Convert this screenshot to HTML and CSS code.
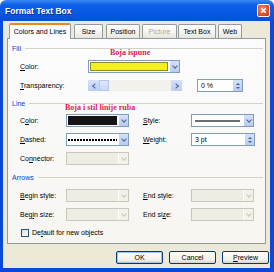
FILE: index.html
```html
<!DOCTYPE html>
<html lang="hr">
<head>
  <meta charset="UTF-8" />
  <title>Format Text Box</title>
  <link rel="stylesheet" href="styles.css">
</head>
<body>

<div class="window">
  <div class="titlebar">
    <span class="title">Format Text Box</span>
    <span class="close">
      <svg width="12" height="13" viewBox="0 0 12 13"><path d="M3.5 4l5 5M8.5 4l-5 5" stroke="#fff" stroke-width="1.6" fill="none"/></svg>
    </span>
  </div>

  <div class="body">
    <div class="tabs">
      <div class="tab active t-colors">Colors and Lines</div>
      <div class="tab t-size">Size</div>
      <div class="tab t-position">Position</div>
      <div class="tab disabled t-picture">Picture</div>
      <div class="tab t-textbox">Text Box</div>
      <div class="tab t-web">Web</div>
    </div>

    <div class="panel">
      <div class="group-head">
        <span>Fill</span>
        <div class="note note-fill">Boja ispune</div>
      </div>
      <div class="row">
        <label class="lbl wide"><u>C</u>olor:</label>
        <div class="combo fill-combo">
          <div class="swatch yellow"></div>
          <div class="btn"></div>
        </div>
      </div>
      <div class="row">
        <label class="lbl wide"><u>T</u>ransparency:</label>
        <div class="slider">
          <div class="sbtn left"></div>
          <div class="thumb"></div>
          <div class="track"></div>
          <div class="sbtn right"></div>
        </div>
        <div class="spinner trans-spin">
          <span class="val">0 %</span>
          <div class="spin"></div>
        </div>
      </div>

      <div class="group-head line-head">
        <span>Line</span>
        <div class="note note-line">Boja i stil linije ruba</div>
      </div>
      <div class="row">
        <label class="lbl">C<u>o</u>lor:</label>
        <div class="combo">
          <div class="swatch black"></div>
          <div class="btn"></div>
        </div>
        <label class="lbl second"><u>S</u>tyle:</label>
        <div class="combo">
          <div class="swatch"><div class="solid"></div></div>
          <div class="btn"></div>
        </div>
      </div>
      <div class="row">
        <label class="lbl"><u>D</u>ashed:</label>
        <div class="combo">
          <div class="swatch"><div class="dash"></div></div>
          <div class="btn"></div>
        </div>
        <label class="lbl second"><u>W</u>eight:</label>
        <div class="spinner">
          <span class="val">3 pt</span>
          <div class="spin"></div>
        </div>
      </div>
      <div class="row">
        <label class="lbl">Co<u>n</u>nector:</label>
        <div class="combo off">
          <div class="swatch"></div>
          <div class="btn"></div>
        </div>
      </div>

      <div class="group-head arrows-head">
        <span>Arrows</span>
      </div>
      <div class="row">
        <label class="lbl"><u>B</u>egin style:</label>
        <div class="combo off">
          <div class="swatch"></div>
          <div class="btn"></div>
        </div>
        <label class="lbl second"><u>E</u>nd style:</label>
        <div class="combo off">
          <div class="swatch"></div>
          <div class="btn"></div>
        </div>
      </div>
      <div class="row">
        <label class="lbl">Beg<u>i</u>n size:</label>
        <div class="combo off">
          <div class="swatch"></div>
          <div class="btn"></div>
        </div>
        <label class="lbl second">End si<u>z</u>e:</label>
        <div class="combo off">
          <div class="swatch"></div>
          <div class="btn"></div>
        </div>
      </div>
      <div class="row check-row">
        <span class="checkbox"></span>
        <label>De<u>f</u>ault for new objects</label>
      </div>
    </div>

    <div class="buttons">
      <button class="default">OK</button>
      <button>Cancel</button>
      <button><u>P</u>review</button>
    </div>
  </div>
</div>

</body>
</html>
```

FILE: styles.css
```css
* {
  box-sizing: border-box;
}

body {
  margin: 0;
  width: 274px;
  height: 272px;
  overflow: hidden;
  font-family: "Liberation Sans", Arial, sans-serif;
  font-size: 7px;
  color: #000;
  background: #fff;
}

.window {
  height: 272px;
  display: flex;
  flex-direction: column;
  border-radius: 6px 6px 0 0;
  overflow: hidden;
}

.titlebar {
  height: 21px;
  display: flex;
  align-items: center;
  justify-content: space-between;
  padding: 0 4px 0 5px;
  background: linear-gradient(#3b86f6, #0a5fe6 25%, #0658e2 65%, #0a4fd0);
  color: #fff;
}

.title {
  font-weight: bold;
  font-size: 8.5px;
  text-shadow: 1px 1px 0 #0a2c8a;
}

.close {
  width: 13px;
  height: 13px;
  display: flex;
  align-items: center;
  justify-content: center;
  border: 1px solid #fff;
  border-radius: 2px;
  background: radial-gradient(circle at 40% 35%, #f08a6a, #d9471e 70%, #c13410);
}

.body {
  flex: 1;
  display: flex;
  flex-direction: column;
  background: #ece9d8;
  border: solid #0a48d8;
  border-width: 0 4px 4px 3px;
  padding: 3px 4px 0;
}

/* tabs */

.tabs {
  display: flex;
  align-items: flex-end;
  gap: 2px;
  margin-left: 2px;
  height: 14px;
  position: relative;
  z-index: 1;
}

.tab {
  height: 14px;
  line-height: 13px;
  text-align: center;
  border: 1px solid #919b9c;
  border-bottom: none;
  border-radius: 2px 2px 0 0;
  background: linear-gradient(#fff, #f3f3ef 60%, #e6e5dc);
}

.tab.active {
  height: 16px;
  margin-bottom: -1px;
  line-height: 14px;
  background: #fcfcfe;
  border-top: 2px solid #e68b2c;
}

.tab.disabled {
  color: #aca899;
}

.t-colors { width: 62px; }
.t-size { width: 29px; margin-left: 1px; }
.t-position { width: 34px; margin-left: 1px; }
.t-picture { width: 35px; }
.t-textbox { width: 38px; margin-left: -1px; }
.t-web { width: 24px; }

/* panel */

.panel {
  height: 206px;
  border: 1px solid #919b9c;
  padding: 0 2px 0 4px;
  background: linear-gradient(#fcfcfe, #f6f5f0);
}

.group-head {
  position: relative;
  display: flex;
  align-items: center;
  height: 18px;
  color: #0046d5;
}

.group-head::after {
  content: "";
  flex: 1;
  margin-left: 4px;
  border-top: 1px solid #d4d2c6;
}

.line-head {
  height: 16px;
}

.arrows-head {
  height: 18px;
}

.note {
  position: absolute;
  font-family: "Liberation Serif", "Times New Roman", serif;
  font-weight: bold;
  font-size: 8px;
  line-height: 8px;
  color: #d6245a;
  white-space: nowrap;
}

.note-fill {
  top: 10px;
  left: 98px;
}

.note-line {
  top: 9px;
  left: 53px;
}

.row {
  display: flex;
  align-items: center;
  height: 19px;
  padding-left: 8px;
}

.lbl {
  width: 46px;
  flex-shrink: 0;
}

.lbl.wide {
  width: 68px;
}

.lbl.second {
  width: 48px;
  margin-left: 14px;
}

/* combo boxes */

.combo {
  display: flex;
  width: 63px;
  height: 13px;
  border: 1px solid #7f9db9;
  background: #fff;
}

.fill-combo {
  width: 92px;
}

.swatch {
  flex: 1;
  margin: 1px;
  display: flex;
  align-items: center;
}

.swatch.yellow {
  background: #f4f020;
  border: 1px solid #8a8a2a;
}

.swatch.black {
  background: #141414;
}

.solid {
  flex: 1;
  margin: 0 2px;
  height: 2px;
  background: #6e6e6e;
}

.dash {
  flex: 1;
  height: 2px;
  background: repeating-linear-gradient(90deg, #000 0 2px, transparent 2px 3px);
}

.btn {
  width: 10px;
  display: flex;
  align-items: center;
  justify-content: center;
  background: linear-gradient(#d4e1fb, #b7cbf4);
  border-left: 1px solid #fff;
}

.btn::after {
  content: "";
  width: 3px;
  height: 3px;
  margin-top: -2px;
  border: solid #4d6185;
  border-width: 0 1.5px 1.5px 0;
  transform: rotate(45deg);
}

.combo.off {
  border-color: #c9c7ba;
  background: #efede3;
}

.combo.off .btn {
  background: #f3f1e8;
}

.combo.off .btn::after {
  border-color: #c9c7ba;
}

/* transparency slider */

.slider {
  display: flex;
  width: 94px;
  height: 11px;
  background: #f2f1ec;
}

.sbtn {
  width: 11px;
  display: flex;
  align-items: center;
  justify-content: center;
  background: linear-gradient(#d4e1fb, #b9ccf4);
  border-radius: 1px;
}

.sbtn::after {
  content: "";
  width: 3px;
  height: 3px;
  border: solid #4d6185;
  border-width: 0 1.5px 1.5px 0;
}

.sbtn.left::after {
  transform: rotate(135deg);
  margin-left: 2px;
}

.sbtn.right::after {
  transform: rotate(-45deg);
  margin-right: 2px;
}

.thumb {
  width: 10px;
  background: linear-gradient(#dfe8fb, #c8d7f6);
  border: 1px solid #b4c6ee;
}

.track {
  flex: 1;
}

/* spinner */

.spinner {
  display: flex;
  align-items: center;
  width: 64px;
  height: 13px;
  border: 1px solid #7f9db9;
  background: #fff;
}

.trans-spin {
  width: 46px;
  margin-left: 15px;
}

.val {
  flex: 1;
  padding-left: 3px;
}

.spin {
  width: 9px;
  height: 11px;
  display: flex;
  flex-direction: column;
  align-items: center;
  justify-content: center;
  gap: 2px;
  background: linear-gradient(#d4e1fb, #b7cbf4);
}

.spin::before,
.spin::after {
  content: "";
  border-left: 2px solid transparent;
  border-right: 2px solid transparent;
}

.spin::before {
  border-bottom: 2px solid #4d6185;
}

.spin::after {
  border-top: 2px solid #4d6185;
}

/* checkbox */

.check-row {
  height: 17px;
  padding-left: 9px;
  gap: 3px;
}

.checkbox {
  width: 8px;
  height: 8px;
  border: 1px solid #1c5180;
  background: linear-gradient(135deg, #dcdcd7, #fff);
}

/* dialog buttons */

.buttons {
  display: flex;
  justify-content: flex-end;
  gap: 6px;
  margin-top: 7px;
  margin-right: -3px;
}

.buttons button {
  width: 47px;
  height: 13px;
  padding: 0;
  font-family: inherit;
  font-size: 7px;
  color: #000;
  border: 1px solid #003c74;
  border-radius: 2px;
  background: linear-gradient(#fff, #f2f1ea 70%, #d8d3c6);
}

.buttons button.default {
  box-shadow: inset 0 0 0 1px #a8c2ee;
}
```
